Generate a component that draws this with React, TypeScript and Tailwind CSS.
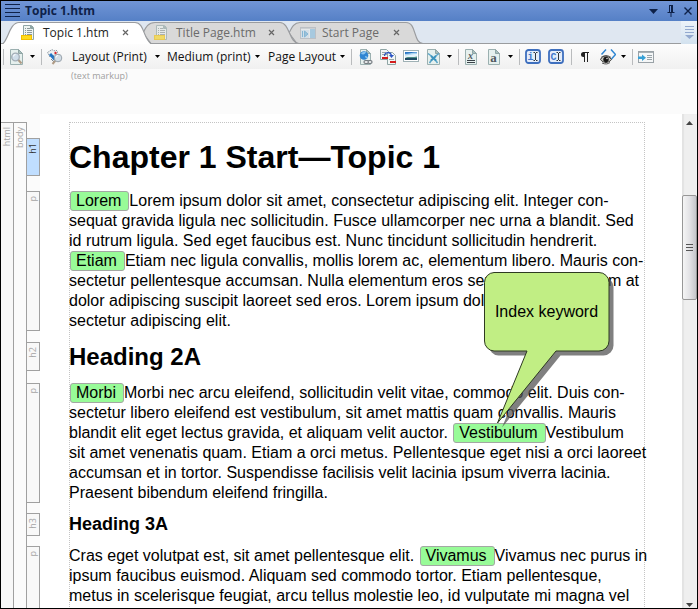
import type { ReactNode } from "react";

const UI_FONT = "font-['Open_Sans','Noto_Sans',sans-serif]";
const DOC_FONT = "font-['Liberation_Sans',Arial,sans-serif]";

function Svg({ children, className = "" }: { children: ReactNode; className?: string }) {
  return (
    <svg width="16" height="16" viewBox="0 0 16 16" className={`block shrink-0 ${className}`} aria-hidden="true">
      {children}
    </svg>
  );
}

function PageShape() {
  return (
    <>
      <path d="M1.5.5h8l4 4v11h-12z" fill="#e6f0ee" stroke="#9bb0b0" />
      <path d="M9.5.5v4h4z" fill="#a9bfbd" stroke="#8fa5a5" />
    </>
  );
}

function TopicIcon() {
  return (
    <Svg>
      <path d="M2.5.5h8l2 2v12h-10z" fill="#eef4f2" stroke="#8fa5a5" />
      <path d="M9.5.5v3h3z" fill="#8fa5a5" stroke="#8fa5a5" />
      <path d="M4 3.5h1m1 0h3M4 5.5h1m1 0h5M4 7.5h1m1 0h5M4 9.5h1m1 0h5" stroke="#8b9798" />
      <rect x=".5" y="10.5" width="10" height="4" fill="#ffdb1c" stroke="#f3c000" />
    </Svg>
  );
}

function StartIcon() {
  return (
    <Svg>
      <rect x=".5" y="2.5" width="15" height="11" fill="#eef3f6" stroke="#a9b1b8" />
      <path d="M1 3.5h14" stroke="#c3c9ce" />
      <rect x="10" y="4" width="5" height="9" fill="#86bfe4" />
      <rect x="1" y="5" width="8" height="8" fill="#cfe4f2" />
      <path d="M2.500 6v6M4.500 6l3.500 3-3.500 3z" fill="#6fb3de" stroke="#4f9fd2" />
    </Svg>
  );
}

function PreviewIcon() {
  return (
    <Svg>
      <PageShape />
      <path d="M9 10.500l3.500 4" stroke="#b09c86" strokeWidth="2" />
      <circle cx="6.500" cy="8" r="3.800" fill="#cfdde9" stroke="#a3adb6" strokeWidth="1.300" />
      <path d="M4.500 7.500a2 2 0 0 1 2-2" stroke="#fff" fill="none" />
    </Svg>
  );
}

function ToolsIcon() {
  return (
    <Svg>
      <path d="M.5 3.500L5 .5l2 1.500 2-1 2 2-5 4-3 1z" fill="#eef1f3" stroke="#87929a" strokeDasharray="1.500 1" />
      <path d="M3 5l5 5.500" stroke="#2173c4" strokeWidth="3" />
      <path d="M7 4l1.500-1.500L10 4 8.500 5.500z" fill="#d8262c" />
      <path d="M4 10l3 3" stroke="#7d888f" />
      <path d="M8.500 11.500l-3 3.500" stroke="#b09c86" strokeWidth="2" />
      <circle cx="11" cy="9" r="3.800" fill="#d3dee7" stroke="#98a2ab" />
      <path d="M9 8.500a2 2 0 0 1 2-2" stroke="#fff" fill="none" />
    </Svg>
  );
}

function LinkIcon() {
  return (
    <Svg className="translate-x-px">
      <path d="M2.500.5h6l4 4v11h-10z" fill="#e6f0ee" stroke="#9bb0b0" />
      <path d="M8.500.5v4h4z" fill="#a9bfbd" stroke="#8fa5a5" />
      <circle cx="6" cy="6.500" r="4.300" fill="#2f86d2" />
      <path d="M3 5c1-2 3-2.500 5-2-1 2-2 3-5 2zM7 7c2 0 3 1 3 2-1 1-3 0-3-2z" fill="#8bc4ee" />
      <g fill="#e4e6e7" stroke="#747b80" strokeWidth="1.200">
        <rect x="6" y="11.500" width="5" height="3" rx="1.500" />
        <rect x="10" y="11.500" width="4" height="3" rx="1.500" />
      </g>
    </Svg>
  );
}

function CrossRefIcon() {
  return (
    <Svg>
      <path d="M.5.5h6l2 2v8h-8z" fill="#f2f6f5" stroke="#8fa5a5" />
      <path d="M2 3.500h4M2 5.500h5" stroke="#98a5a6" />
      <path d="M7.500 3.500h5l3 3v9h-8z" fill="#f2f6f5" stroke="#8fa5a5" />
      <path d="M9 10.500h5" stroke="#98a5a6" />
      <rect x="2" y="8" width="6" height="2" fill="#d31d1d" />
      <rect x="10" y="12" width="6" height="2" fill="#d31d1d" />
      <path d="M4.500 7c0-4 6-5 7-.5" fill="none" stroke="#2b55c4" strokeWidth="1.200" />
      <path d="M9 6h5l-2.500 3z" fill="#2b55c4" />
    </Svg>
  );
}

function ImageIcon() {
  return (
    <Svg>
      <rect x=".5" y="1.500" width="15" height="11" fill="#fff" stroke="#9fb1b5" />
      <rect x="2" y="3" width="12" height="3" fill="#2c77c4" />
      <path d="M2 5c4 0 8-2 12-1.500V8H2z" fill="#a9d3f0" />
      <path d="M2 6.500c4 0 8-2 12-1.500v3H2z" fill="#e6f4fb" />
      <path d="M2 9c3-2 6 0 12-1.500V9H2z" fill="#4f8f86" />
      <rect x="2" y="9" width="12" height="2" fill="#1f4a63" />
    </Svg>
  );
}

function VariableIcon() {
  return (
    <Svg>
      <PageShape />
      <path d="M2 4.500l4 3M13 4.500l-4 3M6 10.500L3.500 14M9 10.500l2.500 3.500" fill="none" stroke="#5aa5c9" strokeWidth="1.500" />
      <path d="M5 7l5 4.500M10 7l-5 4.500" stroke="#3c93bd" strokeWidth="2" />
    </Svg>
  );
}

function GlyphPage({ glyph, underline }: { glyph: string; underline?: boolean }) {
  return (
    <Svg className="translate-x-px">
      <path d="M.5.5h7l4 4v11H.5z" fill="#e6f0ee" stroke="#9bb0b0" />
      <path d="M7.500.5v4h4z" fill="#a9bfbd" stroke="#8fa5a5" />
      <text
        x="5.500"
        y={underline ? 10 : 13}
        textAnchor="middle"
        fontFamily="Liberation Serif, serif"
        fontWeight="bold"
        fontSize={underline ? 10 : 13}
        fontStyle={underline ? "italic" : "normal"}
        fill="#50585e"
      >
        {glyph}
      </text>
      {underline && <path d="M2 11.500h8M2 13.500h8" stroke="#3a4248" />}
    </Svg>
  );
}

function CursorBox({ glyph }: { glyph: string }) {
  return (
    <Svg>
      <rect x="1" y="1" width="14" height="13" rx="2.500" fill="#e4edfa" stroke="#3e6fbe" strokeWidth="1.800" />
      <text x="5.500" y="11" textAnchor="middle" fontFamily="Liberation Mono, monospace" fontWeight="bold" fontSize="10" fill="#4177cc">
        {glyph}
      </text>
      <path d="M8.500 3.500h1.500m1 0h1.500M10.500 4v7M8.500 11.500h1.500m1 0h1.500" stroke="#30363e" />
    </Svg>
  );
}

function PilcrowIcon() {
  return (
    <Svg>
      <path d="M6 3.500h6M7.500 3v10M10.500 3v10" stroke="#222" />
      <path d="M8 3H6.500a2.500 2.500 0 0 0 0 5H8z" fill="#222" />
    </Svg>
  );
}

function EyeIcon() {
  return (
    <Svg>
      <path d="M6 .5L1.500 5.500M11 .5l4.500 5-4 4.500" fill="none" stroke="#2f86d2" strokeWidth="1.500" />
      <path d="M.5 10.500c2-4.500 8-4.500 11 0-3 4-8 4-11 0z" fill="#c6c6c0" stroke="#3b3b39" />
      <circle cx="6" cy="10.500" r="2.700" fill="#161616" />
      <circle cx="7" cy="9.500" r=".7" fill="#fff" />
      <path d="M1 8.500c3-2.500 7-2.500 10 0M2 14c3 1.500 6 1.200 8-.5" fill="none" stroke="#555" />
    </Svg>
  );
}

function InsertIcon() {
  return (
    <Svg>
      <rect x=".5" y="2.500" width="15" height="11" fill="#f5f7f8" stroke="#9aa2a7" />
      <path d="M1 3.500h14" stroke="#aab1b5" />
      <path d="M9 6.500h5M9 8.500h5M9 10.500h5" stroke="#99a3a8" />
      <path d="M0 7.500h4V5.500l4 3.300-4 3.200V10H0z" fill="#36a0d6" />
    </Svg>
  );
}

function Caret({ className = "" }: { className?: string }) {
  return (
    <svg width="5" height="3" viewBox="0 0 5 3" className={`block shrink-0 ${className}`} aria-hidden="true">
      <path d="M0 0h5L2.500 3z" fill="#000" />
    </svg>
  );
}

function Separator() {
  return <span className="mr-[5px] h-4 w-px shrink-0 bg-[#b9bbbd]" />;
}

function Tool({ label, children }: { label: string; children: ReactNode }) {
  return (
    <button type="button" aria-label={label} className="mr-[7px] shrink-0">
      {children}
    </button>
  );
}

function More({ label }: { label: string }) {
  return (
    <button type="button" aria-label={label} className="-ml-0.5 mr-1.5 flex h-5 shrink-0 items-center">
      <Caret />
    </button>
  );
}

function Picker({ label, value, className }: { label: string; value: string; className: string }) {
  return (
    <div className={`relative flex h-5 shrink-0 items-center ${className}`}>
      <select aria-label={label} className="h-5 w-full appearance-none bg-transparent text-[12px] text-[#111] outline-none">
        <option>{value}</option>
      </select>
      <Caret className="pointer-events-none absolute right-0" />
    </div>
  );
}

function Tab({ title, icon, active, width, shape, className = "" }: {
  title: string; icon: ReactNode; active?: boolean; width: number; shape: string; className?: string;
}) {
  return (
    <div className={`relative flex h-[23px] shrink-0 items-center ${active ? "z-10 text-[#222]" : "text-[#6b6b6b]"} ${className}`}>
      <svg width={width} height="23" viewBox={`0 0 ${width} 23`} className="absolute left-0 top-0" aria-hidden="true">
        <path d={shape} fill={active ? "#fff" : "#d9d9d9"} stroke="#9a9c9f" strokeWidth="1.200" />
      </svg>
      <button type="button" role="tab" aria-selected={!!active} className="relative flex flex-1 items-center gap-1.5 text-[12px]">
        <span className={active ? "" : "opacity-60"}>{icon}</span>
        {title}
      </button>
      <button type="button" aria-label={`Close ${title}`} className="relative">
        <svg width="7" height="7" viewBox="0 0 7 7" className="block" aria-hidden="true">
          <path d="M1 1l5 5M6 1L1 6" stroke="#666" strokeWidth="1.200" />
        </svg>
      </button>
    </div>
  );
}

function Keyword({ children }: { children: ReactNode }) {
  return (
    <span className="ml-px inline-block h-5 rounded-[3px] border border-[#a3a8a3] bg-[#98fb98] pl-[5px] pr-[7px] align-top leading-[18px]">
      {children}
    </span>
  );
}

function Sideways({ children }: { children: ReactNode }) {
  return <span className="rotate-180 text-[9px] leading-[11px] [writing-mode:vertical-rl]">{children}</span>;
}

function Block({ tag, current, className = "", children }: {
  tag: string; current?: boolean; className?: string; children: ReactNode;
}) {
  return (
    <div className={`-ml-[43px] flex gap-[29px] ${className}`}>
      <div
        className={`flex w-[13px] shrink-0 items-start border border-l-0 border-[#a0a0a0] pt-1 ${UI_FONT} ${
          current ? "bg-[#c0deff] text-[#333]" : "bg-[#f8f8f8] text-[#a5a5a5]"
        }`}
      >
        <Sideways>{tag}</Sideways>
      </div>
      <div className="whitespace-nowrap">{children}</div>
    </div>
  );
}

function Callout() {
  return (
    <div className="absolute left-[414px] top-[149px] h-[156px] w-[132px]">
      <svg width="132" height="156" viewBox="0 0 132 156" className="absolute inset-0" aria-hidden="true">
        <path
          d="M10 .5H115a10 10 0 0 1 10 10V69a10 10 0 0 1-10 10H72L13.500 151 43 79H10A10 10 0 0 1 .5 69V10.500A10 10 0 0 1 10 .5z"
          transform="translate(4.500 4.500)"
          fill="#555"
          fillOpacity=".75"
        />
        <path
          d="M10 .5H115a10 10 0 0 1 10 10V69a10 10 0 0 1-10 10H72L13.500 151 43 79H10A10 10 0 0 1 .5 69V10.500A10 10 0 0 1 10 .5z"
          fill="#c1ee84"
          stroke="#2e3a22"
        />
      </svg>
      <p className="relative flex h-20 w-[125px] items-center justify-center text-[16px] text-black">Index keyword</p>
    </div>
  );
}

export default function App() {
  return (
    <div className={`flex h-screen flex-col overflow-hidden border border-black bg-white ${UI_FONT}`}>
      <header className="flex h-5 shrink-0 items-center bg-linear-to-b from-[#7195d6] to-[#5580c6] px-1 text-[#0e2148]">
        <svg width="15" height="14" viewBox="0 0 15 14" aria-hidden="true">
          <path d="M0 .5h15M0 4.500h15M0 8.500h15M0 12.500h15" stroke="#0e2148" />
        </svg>
        <h1 className="ml-[5px] flex-1 text-[12px] font-bold">Topic 1.htm</h1>
        <div className="flex items-center gap-[9px] pr-px">
          <button type="button" aria-label="Window menu">
            <svg width="9" height="5" viewBox="0 0 9 5" className="block"><path d="M0 0h9L4.500 5z" fill="#0e2148" /></svg>
          </button>
          <button type="button" aria-label="Pin">
            <svg width="8" height="12" viewBox="0 0 8 12" className="block">
              <path d="M2 .5h4M2.500 0v7M5.500 0v7M4.500 1v6M.500 7.500h7M4 8v4" fill="none" stroke="#0e2148" />
            </svg>
          </button>
          <button type="button" aria-label="Close window">
            <svg width="8" height="8" viewBox="0 0 8 8" className="block">
              <path d="M.5.5l7 7M7.500.5l-7 7" stroke="#0e2148" strokeWidth="1.400" />
            </svg>
          </button>
        </div>
      </header>

      <div role="tablist" className="flex h-[23px] shrink-0 bg-[#dfe7f1]">
        <div className="flex flex-1 border-b border-[#9a9c9f]">
          <Tab
            active
            title="Topic 1.htm"
            icon={<TopicIcon />}
            width={153}
            shape="M0 24C7 22 8 1.500 18 1.500H134C144 1.500 142 20 152 24"
            className="w-[142px] pl-5 pr-[14px]"
          />
          <Tab
            title="Title Page.htm"
            icon={<TopicIcon />}
            width={157}
            shape="M0 12C3 6 5 1.500 12 1.500H137C147 1.500 146 22.500 156 22.500H8z"
            className="z-[5] w-[146px] pl-[11px] pr-[14px]"
          />
          <Tab
            title="Start Page"
            icon={<StartIcon />}
            width={136}
            shape="M0 12C3 6 5 1.500 11 1.500H117C128 1.500 124 22.500 134 22.500H8z"
            className="w-[136px] pl-[11px] pr-[25px]"
          />
        </div>
        <button type="button" aria-label="Tab list" className="flex w-4 items-center justify-center bg-linear-to-b from-[#edf3fa] to-[#d3e2ef]">
          <svg width="9" height="13" viewBox="0 0 9 13">
            <path d="M0 .5h9M0 3.500h9M0 6.500h9" stroke="#93a9cf" />
            <path d="M0 9h9L4.500 13z" fill="#93a9cf" />
          </svg>
        </button>
      </div>

      <div role="toolbar" className="flex h-[25px] shrink-0 items-center overflow-hidden bg-linear-to-b from-[#fdfdfd] to-[#f0f0f0] pl-0.5">
        <Separator />
        <Tool label="Preview"><PreviewIcon /></Tool>
        <More label="Preview options" />
        <Separator />
        <Tool label="Layout mode"><ToolsIcon /></Tool>
        <Picker label="Layout" value="Layout (Print)" className="ml-0.5 w-[88px]" />
        <Picker label="Medium" value="Medium (print)" className="ml-[7px] w-[93px]" />
        <Picker label="Page layout" value="Page Layout" className="ml-2 mr-1.5 w-[77px]" />
        <Separator />
        <Tool label="Insert link"><LinkIcon /></Tool>
        <Tool label="Insert cross-reference"><CrossRefIcon /></Tool>
        <Tool label="Insert image"><ImageIcon /></Tool>
        <Tool label="Insert variable"><VariableIcon /></Tool>
        <More label="Variable options" />
        <Separator />
        <Tool label="Insert equation"><GlyphPage glyph="x" underline /></Tool>
        <Tool label="Insert character"><GlyphPage glyph="a" /></Tool>
        <More label="Character options" />
        <Separator />
        <Tool label="Index entry mode"><CursorBox glyph="i" /></Tool>
        <Tool label="Concept entry mode"><CursorBox glyph="C" /></Tool>
        <Separator />
        <Tool label="Show paragraph marks"><PilcrowIcon /></Tool>
        <Tool label="Show tags"><EyeIcon /></Tool>
        <More label="Tag options" />
        <Separator />
        <Tool label="Insert panel"><InsertIcon /></Tool>
      </div>

      <div className="h-[45px] shrink-0 bg-[#fbfbfb] pl-[70px] text-[9px] leading-[14px] text-[#a0a0a0]">(text markup)</div>

      <div className="flex min-h-0 flex-1">
        <div className="flex w-[39px] shrink-0 bg-[#fbfbfb] pt-2 text-[#a5a5a5]">
          <div className="flex w-[13px] items-start border-r border-t border-[#a0a0a0] bg-[#f8f8f8] pt-1"><Sideways>html</Sideways></div>
          <div className="flex w-[13px] items-start border-r border-t border-[#a0a0a0] bg-[#fbfbfb] pt-1"><Sideways>body</Sideways></div>
        </div>
        <main className={`min-w-0 flex-1 pl-[29px] pr-[37px] pt-2 text-[16px] leading-[20px] text-black ${DOC_FONT}`}>
          <article className="relative border border-dotted border-[#c4c4c4] pt-[15px]">
            <Block tag="h1" current className="mb-[15px]">
              <h2 className="text-[32px] font-bold leading-[38px]">Chapter 1 Start—Topic 1</h2>
            </Block>
            <Block tag="p" className="mb-[11px]">
              <p>
                <Keyword>Lorem</Keyword>Lorem ipsum dolor sit amet, consectetur adipiscing elit. Integer con-<br />
                sequat gravida ligula nec sollicitudin. Fusce ullamcorper nec urna a blandit. Sed<br />
                id rutrum ligula. Sed eget faucibus est. Nunc tincidunt sollicitudin hendrerit.<br />
                <Keyword>Etiam</Keyword>Etiam nec ligula convallis, mollis lorem ac, elementum libero. Mauris con-<br />
                sectetur pellentesque accumsan. Nulla elementum eros sem lectus nisi, quam at<br />
                dolor adipiscing suscipit laoreet sed eros. Lorem ipsum dolor sit amet, con-<br />
                sectetur adipiscing elit.
              </p>
            </Block>
            <Block tag="h2" className="mb-3">
              <h3 className="text-[24px] font-bold leading-[29px]">Heading 2A</h3>
            </Block>
            <Block tag="p" className="mb-2.5">
              <p>
                <Keyword>Morbi</Keyword>Morbi nec arcu eleifend, sollicitudin velit vitae, commodo elit. Duis con-<br />
                sectetur libero eleifend est vestibulum, sit amet mattis quam convallis. Mauris<br />
                blandit elit eget lectus gravida, et aliquam velit auctor. <Keyword>Vestibulum</Keyword>Vestibulum<br />
                sit amet venenatis quam. Etiam a orci metus. Pellentesque eget nisi a orci laoreet<br />
                accumsan et in tortor. Suspendisse facilisis velit lacinia ipsum viverra lacinia.<br />
                Praesent bibendum eleifend fringilla.
              </p>
            </Block>
            <Block tag="h3" className="mb-2.5">
              <h4 className="text-[18px] font-bold leading-[23px]">Heading 3A</h4>
            </Block>
            <Block tag="p">
              <p>
                Cras eget volutpat est, sit amet pellentesque elit. <Keyword>Vivamus</Keyword>Vivamus nec purus in<br />
                ipsum faucibus euismod. Aliquam sed commodo tortor. Etiam pellentesque,<br />
                metus in scelerisque feugiat, arcu tellus molestie leo, id vulputate mi magna vel
              </p>
              <div className="h-10" />
            </Block>
            <Callout />
          </article>
        </main>
        <div className="flex w-[15px] shrink-0 flex-col items-center bg-[#efefef] shadow-[inset_2px_0_1px_#e3e3e3]">
          <svg width="7" height="4" viewBox="0 0 7 4" className="mt-[7px] shrink-0"><path d="M0 4h7L3.500 0z" fill="#444" /></svg>
          <div className="mt-[70px] flex h-[105px] w-full shrink-0 items-center justify-center rounded-xs border border-[#979797] bg-linear-to-r from-[#f5f5f5] via-[#e3e3e6] to-[#c5c6ca]">
            <svg width="7" height="8" viewBox="0 0 7 8"><path d="M0 .5h7M0 3.500h7M0 6.500h7" stroke="#555" /></svg>
          </div>
          <svg width="7" height="4" viewBox="0 0 7 4" className="mb-px mt-auto shrink-0"><path d="M0 0h7L3.500 4z" fill="#444" /></svg>
        </div>
      </div>
    </div>
  );
}
